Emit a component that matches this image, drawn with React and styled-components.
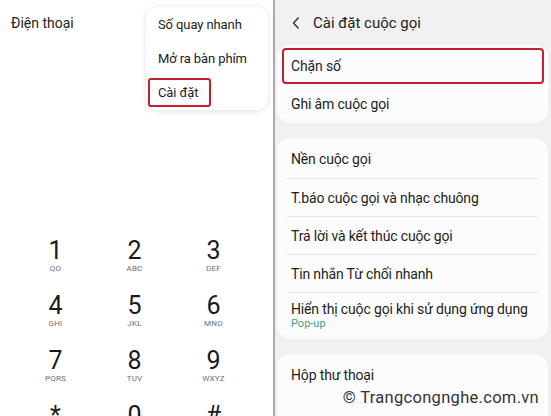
import React from 'react'
import styled, { createGlobalStyle } from 'styled-components'

const GlobalStyle = createGlobalStyle`
  html, body {
    margin: 0;
    padding: 0;
    background: #ffffff;
  }
  body {
    font-family: Roboto, 'Noto Sans', 'Liberation Sans', sans-serif;
    color: #1a1a1a;
  }
  * {
    box-sizing: border-box;
  }
`

const Screen = styled.div`
  display: grid;
  grid-template-columns: 273px 2px 1fr;
  width: 551px;
  height: 416px;
  overflow: hidden;
  position: relative;
`

const Divider = styled.div`
  background: #a9a9a9;
`

/* dialer side */

const Dialer = styled.div`
  position: relative;
  background: #ffffff;
  display: flex;
  flex-direction: column;
`

const DialerTitle = styled.div`
  padding: 13px 0 0 11px;
  font-size: 14px;
  line-height: 20px;
  color: #222;
`

const Menu = styled.div`
  position: absolute;
  top: 7px;
  left: 146px;
  width: 122px;
  height: 103px;
  background: #fff;
  border-radius: 12px;
  box-shadow: 0 1px 6px rgba(0, 0, 0, 0.13);
  display: flex;
  flex-direction: column;
`

const MenuItem = styled.div`
  height: 35px;
  display: flex;
  align-items: center;
  padding-left: 12px;
  font-size: 13px;
  letter-spacing: -0.1px;
  color: #1c1c1c;
  white-space: nowrap;
`

const MenuLabel = styled.span`
  display: flex;
  align-items: center;
  height: 29px;
  padding: 0 8px;
  margin-left: -10px;
  border: ${p => (p.$marked ? '2.5px solid #c41f2b' : '2.5px solid transparent')};
  border-radius: 3px;
  width: ${p => (p.$marked ? '63px' : 'auto')};
`

const Keypad = styled.div`
  display: grid;
  grid-template-columns: repeat(3, 79px);
  grid-auto-rows: 55px;
  padding: 205px 0 0 16px;
`

const Key = styled.div`
  display: flex;
  flex-direction: column;
  align-items: center;
`

const Digit = styled.span`
  font-size: 25px;
  line-height: 25px;
  color: #1a1a1a;
`

const Letters = styled.span`
  font-size: 8px;
  line-height: 10px;
  letter-spacing: 0.2px;
  color: #6e6e6e;
  margin-top: 1px;
`

/* settings side */

const Settings = styled.div`
  background: #f1f1f1;
  padding: 0 3px 0 2px;
  display: flex;
  flex-direction: column;
  gap: 15px;
`

const Header = styled.div`
  height: 45px;
  display: flex;
  align-items: center;
  gap: 12px;
  padding-left: 14px;
  font-size: 15px;
  color: #1c1c1c;
  margin-bottom: -15px;
`

const Card = styled.div`
  background: #fcfcfc;
  border-radius: 14px;
  padding: 2px 0 0;
  flex: ${p => (p.$fill ? '1' : 'none')};
`

const Row = styled.div`
  position: relative;
  display: flex;
  flex-direction: column;
  justify-content: center;
  min-height: ${p => (p.$tall ? '47px' : '38px')};
  margin: 0 ${p => (p.$line ? '10px' : '0')};
  padding-left: ${p => (p.$line ? '4px' : '14px')};
  font-size: 14px;
  letter-spacing: -0.15px;
  color: #1c1c1c;
  white-space: nowrap;
  border-top: ${p => (p.$line ? '1px solid #e6e6e6' : 'none')};
`

const Sub = styled.span`
  font-size: 11px;
  line-height: 14px;
  letter-spacing: 0;
  color: #3aa37f;
`

const Highlight = styled.div`
  position: absolute;
  inset: 1px 4px 1px 5px;
  border: 2.5px solid #c41f2b;
  border-radius: 4px;
`

const Watermark = styled.div`
  position: absolute;
  right: 12px;
  bottom: 9px;
  font-size: 16.5px;
  letter-spacing: 0.3px;
  color: #333;
`

const keys = [
  ['1', 'QO'], ['2', 'ABC'], ['3', 'DEF'],
  ['4', 'GHI'], ['5', 'JKL'], ['6', 'MNO'],
  ['7', 'PQRS'], ['8', 'TUV'], ['9', 'WXYZ'],
  ['*', ''], ['0', '+'], ['#', ''],
]

const BackIcon = () => (
  <svg width="10" height="14" viewBox="0 0 10 14">
    <path d="M7.5 1.5 L2.5 7 L7.5 12.5" fill="none" stroke="#333" strokeWidth="1.4" />
  </svg>
)

const App = () => (
  <>
    <GlobalStyle />
    <Screen>
      <Dialer>
        <DialerTitle>Điện thoại</DialerTitle>
        <Menu>
          <MenuItem><MenuLabel>Số quay nhanh</MenuLabel></MenuItem>
          <MenuItem><MenuLabel>Mở ra bàn phím</MenuLabel></MenuItem>
          <MenuItem><MenuLabel $marked>Cài đặt</MenuLabel></MenuItem>
        </Menu>
        <Keypad>
          {keys.map(([d, l]) => (
            <Key key={d}>
              <Digit>{d}</Digit>
              <Letters>{l}</Letters>
            </Key>
          ))}
        </Keypad>
      </Dialer>
      <Divider />
      <Settings>
        <Header>
          <BackIcon />
          <span>Cài đặt cuộc gọi</span>
        </Header>
        <Card>
          <Row>
            Chặn số
            <Highlight />
          </Row>
          <Row>Ghi âm cuộc gọi</Row>
        </Card>
        <Card>
          <Row>Nền cuộc gọi</Row>
          <Row $line>T.báo cuộc gọi và nhạc chuông</Row>
          <Row $line>Trả lời và kết thúc cuộc gọi</Row>
          <Row $line>Tin nhắn Từ chối nhanh</Row>
          <Row $line $tall>
            Hiển thị cuộc gọi khi sử dụng ứng dụng
            <Sub>Pop-up</Sub>
          </Row>
        </Card>
        <Card $fill>
          <Row>Hộp thư thoại</Row>
        </Card>
      </Settings>
      <Watermark>© Trangcongnghe.com.vn</Watermark>
    </Screen>
  </>
)

export default App
